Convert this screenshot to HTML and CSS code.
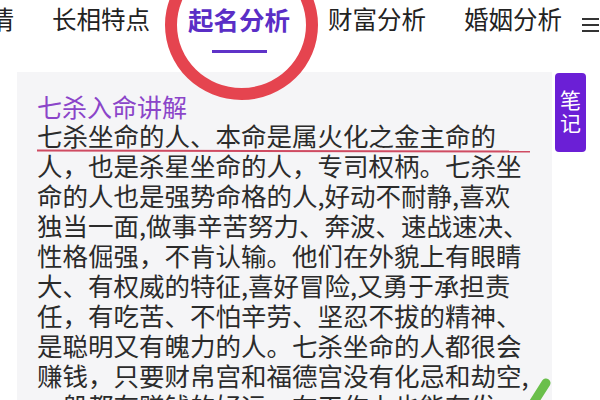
FILE: index.html
```html
<!doctype html>
<html lang="zh-CN">
  <head>
    <meta charset="UTF-8" />
    <meta name="viewport" content="width=device-width, initial-scale=1.0" />
    <title>七杀入命讲解</title>
    <link rel="stylesheet" href="styles.css">
  </head>
  <body>
    <div class="header">
      <div class="tabs">
        <div class="tab">感情</div>
        <div class="tab">长相特点</div>
        <div class="tab active">起名分析</div>
        <div class="tab">财富分析</div>
        <div class="tab">婚姻分析</div>
      </div>
      <div class="menu">
        <svg width="17" height="14" viewBox="0 0 17 14">
          <rect x="0" y="0" width="17" height="2" fill="#333" />
          <rect x="0" y="6" width="17" height="2" fill="#333" />
          <rect x="0" y="12" width="17" height="2" fill="#333" />
        </svg>
      </div>
    </div>

    <div class="card">
      <h2 class="title">七杀入命讲解</h2>
      <p class="content">
        七杀坐命的人、本命是属火化之金主命的人，也是杀星坐命的人，专司权柄。七杀坐命的人也是强势命格的人,好动不耐静,喜欢独当一面,做事辛苦努力、奔波、速战速决、性格倔强，不肯认输。他们在外貌上有眼睛大、有权威的特征,喜好冒险,又勇于承担责任，有吃苦、不怕辛劳、坚忍不拔的精神、是聪明又有魄力的人。七杀坐命的人都很会赚钱，只要财帛宫和福德宫没有化忌和劫空,一般都有赚钱的好运，在工作上也能有发展，
      </p>
    </div>

    <div class="note-btn">笔记</div>

    <!-- hand-drawn marks on top of the screenshot -->
    <div class="ring"></div>
    <div class="red-line"></div>
    <svg class="check" width="40" height="40" viewBox="0 0 40 40">
      <line x1="30" y1="6" x2="16" y2="28" stroke="#6abf4b" stroke-width="9" stroke-linecap="round" />
    </svg>
  </body>
</html>
```

FILE: styles.css
```css
body {
  font-family: "Noto Sans CJK SC", "Noto Sans", sans-serif;
  background-color: #fff;
  margin: 0;
  padding: 0;
  height: 400px;
  overflow: hidden;
  position: relative;
}
.header {
  display: flex;
  height: 72px;
}
.tabs {
  flex: 1;
  display: flex;
  gap: 38px;
  margin-left: -35px;
  overflow: hidden;
}
.tab {
  display: flex;
  flex-direction: column;
  align-items: center;
  font-size: 24.5px;
  line-height: 38px;
  color: #222;
  white-space: nowrap;
}
.tab.active {
  font-size: 25.5px;
  font-weight: bold;
  color: #5a2ec6;
}
.tab.active::after {
  content: "";
  display: block;
  width: 55px;
  height: 3px;
  margin-top: 12px;
  background-color: #5f33c8;
}
.menu {
  width: 17px;
  margin-right: 1px;
  padding-top: 13px;
}
.card {
  width: 495px;
  margin-left: 17px;
  padding: 20px 20px 40px;
  background-color: #f5f5f7;
}
.title {
  margin: 0;
  font-size: 25px;
  font-weight: normal;
  line-height: 28px;
  color: #8b45c9;
}
.content {
  margin: 0;
  font-size: 25.5px;
  line-height: 30px;
  color: #2b2b2b;
}
.note-btn {
  position: absolute;
  top: 73px;
  right: 14px;
  width: 31px;
  height: 79px;
  border-radius: 4px;
  background-color: #6b1fd6;
  color: white;
  font-size: 21px;
  writing-mode: vertical-rl;
  letter-spacing: 2px;
  display: flex;
  align-items: center;
  justify-content: center;
}
.ring {
  position: absolute;
  left: 165px;
  top: -50px;
  width: 153px;
  height: 150px;
  box-sizing: border-box;
  border: 12px solid #e5444f;
  border-radius: 50%;
}
.red-line {
  position: absolute;
  left: 37px;
  top: 150px;
  width: 493px;
  height: 2px;
  background-color: #cf4b62;
  transform: rotate(0.12deg);
}
.check {
  position: absolute;
  left: 516px;
  top: 377px;
}
```
